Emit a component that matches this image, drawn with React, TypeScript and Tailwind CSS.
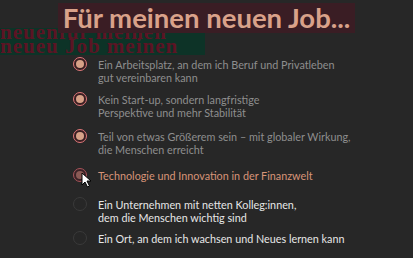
import React from 'react';

type Item = {
  lines: string[];
  state: 'checked' | 'hover' | 'empty';
  gap: string;
};

const items: Item[] = [
  { lines: ['Ein Arbeitsplatz, an dem ich Beruf und Privatleben', 'gut vereinbaren kann'], state: 'checked', gap: 'mt-0' },
  { lines: ['Kein Start-up, sondern langfristige', 'Perspektive und mehr Stabilität'], state: 'checked', gap: 'mt-[9px]' },
  { lines: ['Teil von etwas Größerem sein – mit globaler Wirkung,', 'die Menschen erreicht'], state: 'checked', gap: 'mt-[11px]' },
  { lines: ['Technologie und Innovation in der Finanzwelt'], state: 'hover', gap: 'mt-[13px]' },
  { lines: ['Ein Unternehmen mit netten Kolleg:innen,', 'dem die Menschen wichtig sind'], state: 'empty', gap: 'mt-[16px]' },
  { lines: ['Ein Ort, an dem ich wachsen und Neues lernen kann'], state: 'empty', gap: 'mt-[8px]' },
];

function Radio({ state }: { state: Item['state'] }) {
  if (state === 'empty') {
    return <span className="-mt-[1px] block h-[14px] w-[14px] shrink-0 rounded-full border border-[#3a3a3a]" />;
  }
  return (
    <span
      className={`-mt-[1px] flex h-[14px] w-[14px] shrink-0 items-center justify-center rounded-full border-[1.5px] ${
        state === 'hover' ? 'border-[#a8545a] bg-[#3a2226]' : 'border-[#e0787a] bg-[#3a1e22]'
      }`}
    >
      <span className={`block h-[8px] w-[8px] rounded-full ${state === 'hover' ? 'bg-[#8a5a55]' : 'bg-[#d8a288]'}`} />
    </span>
  );
}

function Cursor() {
  return (
    <svg className="absolute left-[8px] top-[3px]" width="11" height="16" viewBox="0 0 11 16">
      <path d="M1 1 L1 13 L4 10 L6.5 15 L8.5 14 L6 9 L10 9 Z" fill="#ffffff" stroke="#000000" strokeWidth="1" />
    </svg>
  );
}

export default function App() {
  return (
    <div className="relative h-[258px] w-[413px] overflow-hidden bg-[#272727]" style={{ fontFamily: 'Lato, "Open Sans", sans-serif' }}>
      {/* ghost artifact under the title */}
      <div className="absolute left-0 top-[28px] h-[27px] w-[205px] overflow-hidden bg-[#0d3327] text-[#5c1424]" style={{ fontFamily: '"Liberation Serif", serif' }}>
        <div className="-mt-[3px] text-[21px] font-bold leading-[14px] tracking-[1px]">neuenfür meinen</div>
        <div className="text-[21px] font-bold leading-[14px] tracking-[1px]">neueu Job meinen</div>
      </div>

      <div className="flex justify-center pt-[3px]">
        <h1 className="relative bg-[#3a1d24] px-[5px] text-[27.5px] font-bold leading-[30px] text-[#d9a28a]">
          Für meinen neuen Job...
        </h1>
      </div>

      <ul className="relative mt-[25px] flex flex-col pl-[73px] text-[10.8px] leading-[13px]">
        {items.map((item, i) => (
          <li key={i} className={`relative flex items-start gap-[11px] ${item.gap}`}>
            <span className="relative">
              <Radio state={item.state} />
              {item.state === 'hover' && <Cursor />}
            </span>
            <span
              className={
                item.state === 'checked'
                  ? 'text-[#8e8e8e]'
                  : item.state === 'hover'
                  ? 'text-[#d89478]'
                  : 'text-[#e6e6e6]'
              }
            >
              {item.lines.map((l, j) => (
                <div key={j}>{l}</div>
              ))}
            </span>
          </li>
        ))}
      </ul>
    </div>
  );
}
